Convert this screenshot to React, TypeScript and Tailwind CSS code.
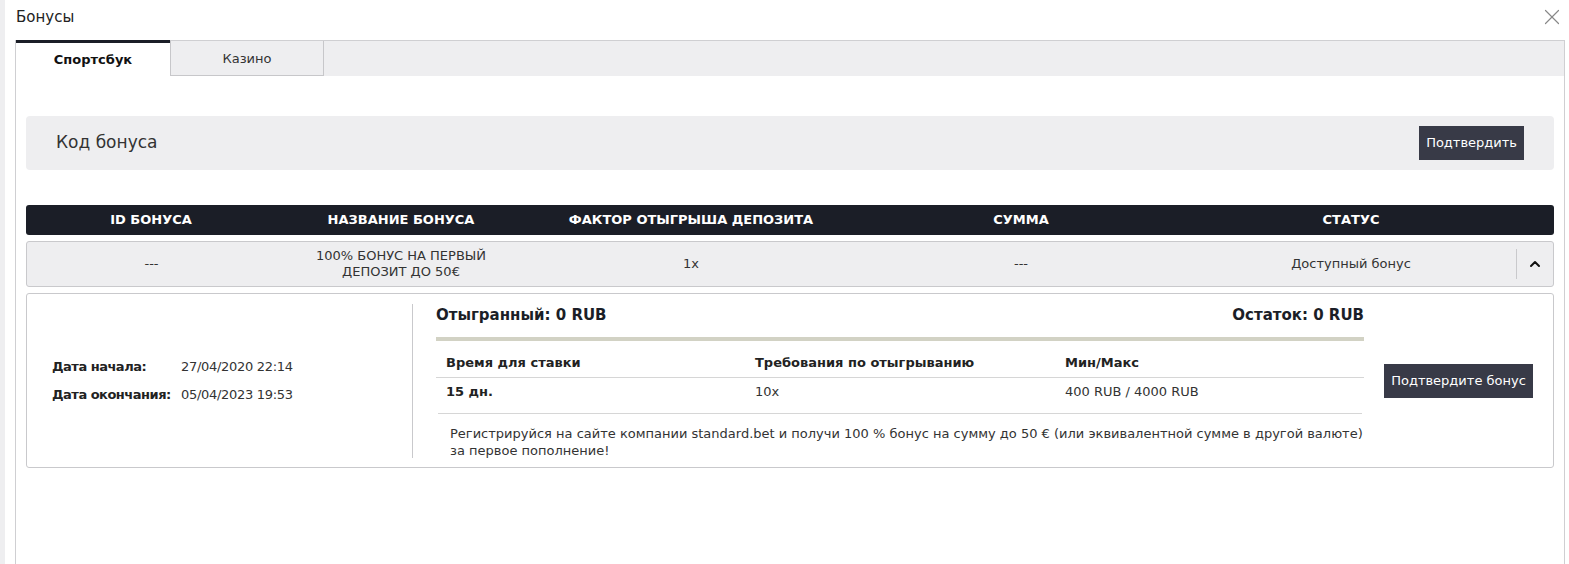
import { X, ChevronUp } from 'lucide-react';

const columns = [
  { title: 'ID бонуса', width: 'w-[250px]' },
  { title: 'Название бонуса', width: 'w-[250px]' },
  { title: 'Фактор отыгрыша депозита', width: 'w-[330px]' },
  { title: 'Сумма', width: 'w-[330px]' },
  { title: 'Статус', width: 'w-[330px]' },
];

const font = { fontFamily: '"DejaVu Sans", Montserrat, sans-serif' };

export default function App() {
  return (
    <div className="flex h-[564px] w-full overflow-hidden bg-white text-[#222]" style={font}>
      <div className="w-[5px] shrink-0 bg-[#eeeef0]" />
      <div className="flex flex-1 flex-col">
        <div className="flex h-[40px] items-start justify-between pl-[11px] pr-[4px] pt-[6px]">
          <h1 className="text-[15px] text-[#222]">Бонусы</h1>
          <X size={26} strokeWidth={1.1} className="-mt-[2px] text-[#888]" />
        </div>

        <div className="ml-[10px] mr-[4px] flex flex-1 flex-col border-l border-r border-t border-[#cfcfd2]">
          {/* tabs */}
          <div className="flex h-[35px] bg-[#eeeef0]">
            <button className="w-[154px] -mt-px border-t-[3px] border-[#1b1e27] bg-white text-[13px] font-bold text-[#111]">
              Спортсбук
            </button>
            <button className="w-[154px] border-x border-b border-[#c7c7ca] pt-[1px] text-[13px] text-[#333]">
              Казино
            </button>
          </div>

          <div className="flex flex-col px-[10px] pt-[40px]">
            {/* bonus code */}
            <div className="flex h-[54px] items-center justify-between rounded-[4px] bg-[#eeeef0] pl-[30px] pr-[30px]">
              <span className="text-[17px] text-[#333]">Код бонуса</span>
              <button className="h-[34px] bg-[#383a47] px-[7px] text-[13px] text-white">Подтвердить</button>
            </div>

            {/* table head */}
            <div className="mt-[35px] flex h-[30px] items-center rounded-[3px] bg-[#1b1e27] text-white">
              {columns.map((c) => (
                <div key={c.title} className={`${c.width} text-center text-[13px] font-bold uppercase`}>
                  {c.title}
                </div>
              ))}
            </div>

            {/* bonus row */}
            <div className="mt-[6px] flex h-[46px] items-center rounded-[3px] border border-[#c9c9cc] bg-[#eeeef0] text-[13px] text-[#333]">
              <div className="w-[249px] text-center">---</div>
              <div className="w-[250px] text-center leading-[16px]">
                100% БОНУС НА ПЕРВЫЙ
                <br />
                ДЕПОЗИТ ДО 50€
              </div>
              <div className="w-[330px] text-center">1x</div>
              <div className="w-[330px] text-center">---</div>
              <div className="w-[330px] text-center">Доступный бонус</div>
              <div className="flex h-[30px] flex-1 items-center justify-center border-l border-[#c9c9cc]">
                <ChevronUp size={16} strokeWidth={3} className="text-[#111]" />
              </div>
            </div>

            {/* details */}
            <div className="mt-[6px] flex h-[175px] items-center rounded-[3px] border border-[#c9c9cc] bg-white text-[13px]">
              <div className="flex h-[154px] w-[386px] flex-col justify-center gap-[8px] border-r border-[#c9c9cc] pl-[25px]">
                <div className="flex">
                  <span className="w-[129px] font-bold tracking-[-0.5px]">Дата начала:</span>
                  <span className="text-[#333] tracking-[-0.3px]">27/04/2020 22:14</span>
                </div>
                <div className="flex">
                  <span className="w-[129px] font-bold tracking-[-0.5px]">Дата окончания:</span>
                  <span className="text-[#333] tracking-[-0.3px]">05/04/2023 19:53</span>
                </div>
              </div>

              <div className="ml-[23px] flex h-[154px] w-[928px] flex-col">
                <div className="flex justify-between text-[15px] font-bold text-[#1b1e27]">
                  <span>Отыгранный: 0 RUB</span>
                  <span>Остаток: 0 RUB</span>
                </div>
                <div className="mt-[11px] h-[4px] shrink-0 bg-[#d2d2c4]" />
                <div className="mt-[12px] flex border-b border-[#d6d6d6] pb-[4px] pl-[10px] font-bold">
                  <span className="w-[309px]">Время для ставки</span>
                  <span className="w-[310px]">Требования по отыгрыванию</span>
                  <span>Мин/Макс</span>
                </div>
                <div className="mx-[2px] flex border-b border-[#d6d6d6] pb-[12px] pl-[8px] pt-[4px]">
                  <span className="w-[309px] font-bold">15 дн.</span>
                  <span className="w-[310px] text-[#333]">10x</span>
                  <span className="text-[#333]">400 RUB / 4000 RUB</span>
                </div>
                <p className="mt-[11px] pl-[14px] leading-[17px] text-[#333]">
                  Регистрируйся на сайте компании standard.bet и получи 100 % бонус на сумму до 50 € (или эквивалентной сумме в другой валюте)
                  <br />
                  за первое пополнение!
                </p>
              </div>

              <div className="flex flex-1 justify-center">
                <button className="h-[34px] bg-[#383a47] px-[7px] text-[13px] text-white">Подтвердите бонус</button>
              </div>
            </div>
          </div>
        </div>
      </div>
    </div>
  );
}
